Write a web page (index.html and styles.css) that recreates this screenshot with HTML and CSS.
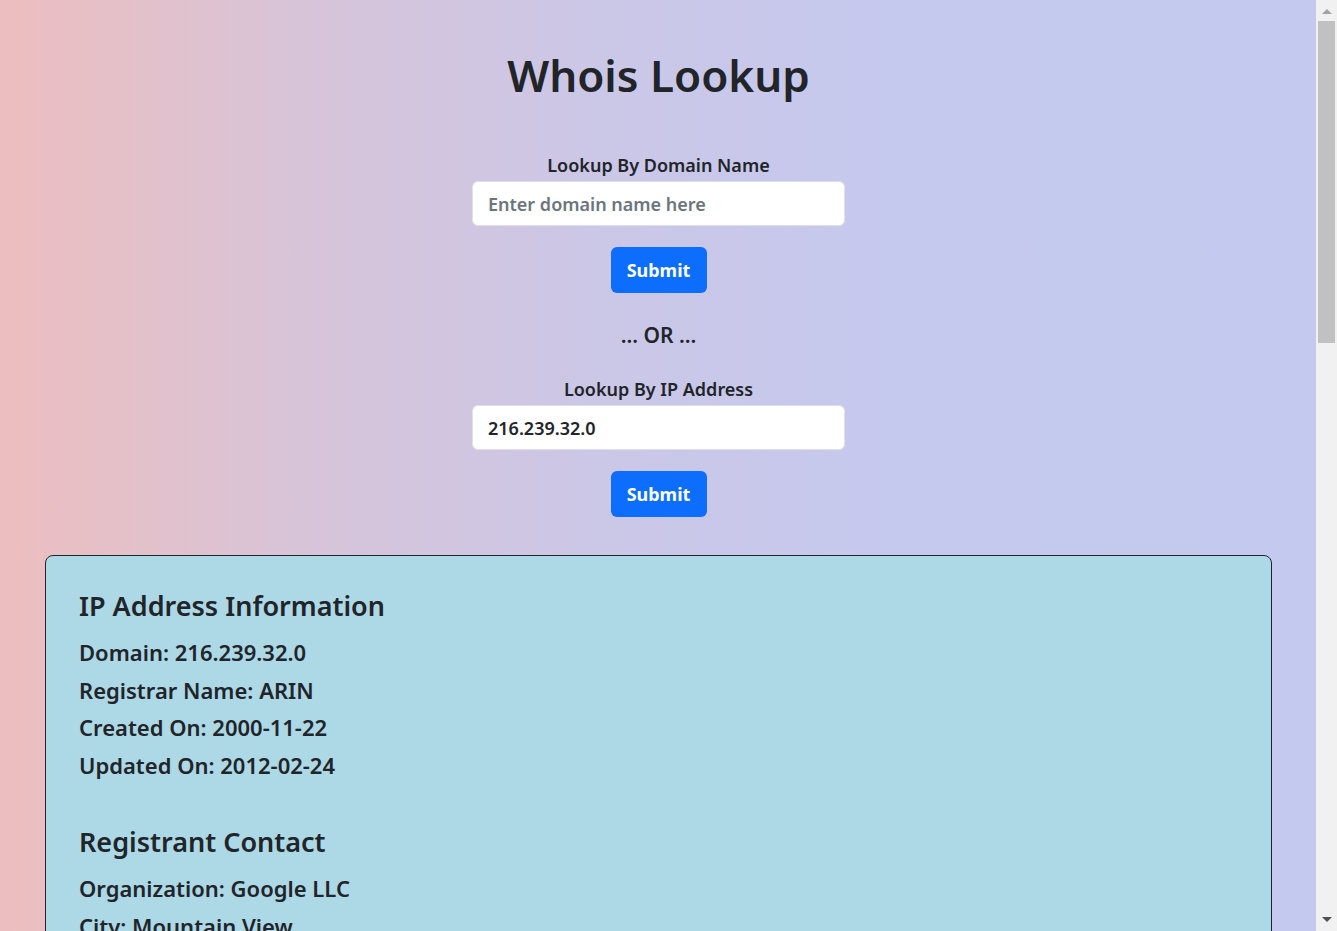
FILE: index.html
```html
<!DOCTYPE html>
<html lang="en">
<head>
<meta charset="utf-8">
<title>Whois Lookup</title>
<link rel="stylesheet" href="styles.css">
</head>
<body>
<main class="page">
  <h1 class="title">Whois Lookup</h1>
  <form class="lookup">
    <label class="lookup-label" for="domain">Lookup By Domain Name</label>
    <input class="lookup-input" id="domain" type="text" placeholder="Enter domain name here">
    <button class="btn" type="button">Submit</button>
  </form>
  <p class="or">... OR ...</p>
  <form class="lookup">
    <label class="lookup-label" for="ip">Lookup By IP Address</label>
    <input class="lookup-input" id="ip" type="text" value="216.239.32.0">
    <button class="btn" type="button">Submit</button>
  </form>
  <section class="card">
    <div class="block">
      <h2 class="block-title">IP Address Information</h2>
      <p class="row">Domain: 216.239.32.0</p>
      <p class="row">Registrar Name: ARIN</p>
      <p class="row">Created On: 2000-11-22</p>
      <p class="row">Updated On: 2012-02-24</p>
    </div>
    <div class="block">
      <h2 class="block-title">Registrant Contact</h2>
      <p class="row">Organization: Google LLC</p>
      <p class="row">City: Mountain View</p>
      <p class="row">State: CA</p>
      <p class="row">Country: US</p>
      <p class="row">Postal Code: 94043</p>
      <p class="row">Street: 1600 Amphitheatre Parkway</p>
    </div>
  </section>
</main>
<div class="scrollbar" aria-hidden="true">
  <span class="scroll-arrow up"></span>
  <span class="scroll-thumb"></span>
  <span class="scroll-arrow down"></span>
</div>
</body>
</html>
```
FILE: styles.css
```css
html, body {
  margin: 0;
  padding: 0;
}
body {
  font-family: "Noto Sans", "Open Sans", sans-serif;
  font-weight: 600;
  color: #212529;
  background: linear-gradient(to right, #edbebf 0%, #d7c4d9 23%, #cbc7e7 45%, #c5c9ee 68%, #c4c9ef 100%);
  min-height: 100vh;
  padding-right: 21px;
  overflow-x: hidden;
}
.page {
  margin: 0 44px 0 45px;
  padding: 48px 0 48px;
  display: flex;
  flex-direction: column;
  align-items: center;
}
.title {
  margin: 0;
  font-size: 44px;
  line-height: 55px;
  font-weight: 600;
}
.lookup {
  display: flex;
  flex-direction: column;
  align-items: center;
  margin-top: 48px;
}
.lookup + .or {
  margin-top: 28px;
}
.or + .lookup {
  margin-top: 26px;
}
.lookup-label {
  font-size: 18px;
  line-height: 28px;
  margin-bottom: 2px;
}
.lookup-input {
  box-sizing: border-box;
  width: 373px;
  height: 45px;
  padding: 0 15px;
  font: inherit;
  font-size: 18px;
  color: #212529;
  background: #fff;
  border: 1px solid #dee2e6;
  border-radius: 6px;
  outline: none;
}
.lookup-input::placeholder {
  color: #6c757d;
}
.btn {
  margin-top: 21px;
  width: 96px;
  height: 46px;
  font: inherit;
  font-size: 18px;
  font-weight: 700;
  color: #fff;
  background: #0d6efd;
  border: 0;
  border-radius: 6px;
}
.or {
  margin: 0;
  font-size: 21px;
  line-height: 28px;
  font-weight: 600;
}
.card {
  align-self: stretch;
  margin-top: 38px;
  background: #add8e6;
  border: 1px solid #212529;
  border-radius: 8px;
  padding: 32px 33px 40px;
}
.block + .block {
  margin-top: 40px;
}
.block-title {
  margin: 0 0 10px;
  font-size: 27px;
  line-height: 36px;
  font-weight: 600;
}
.row {
  margin: 0;
  font-size: 22px;
  line-height: 37.5px;
}
.scrollbar {
  position: fixed;
  top: 0;
  right: 0;
  width: 21px;
  height: 100%;
  background: #f1f1f1;
  display: flex;
  flex-direction: column;
  align-items: center;
}
.scroll-arrow {
  width: 0;
  height: 0;
  border-left: 5px solid transparent;
  border-right: 5px solid transparent;
}
.scroll-arrow.up {
  margin-top: 9px;
  border-bottom: 5px solid #a3a3a3;
}
.scroll-arrow.down {
  margin-top: auto;
  margin-bottom: 9px;
  border-top: 5px solid #505050;
}
.scroll-thumb {
  margin-top: 7px;
  width: 17px;
  height: 322px;
  background: #c1c1c1;
}
```
